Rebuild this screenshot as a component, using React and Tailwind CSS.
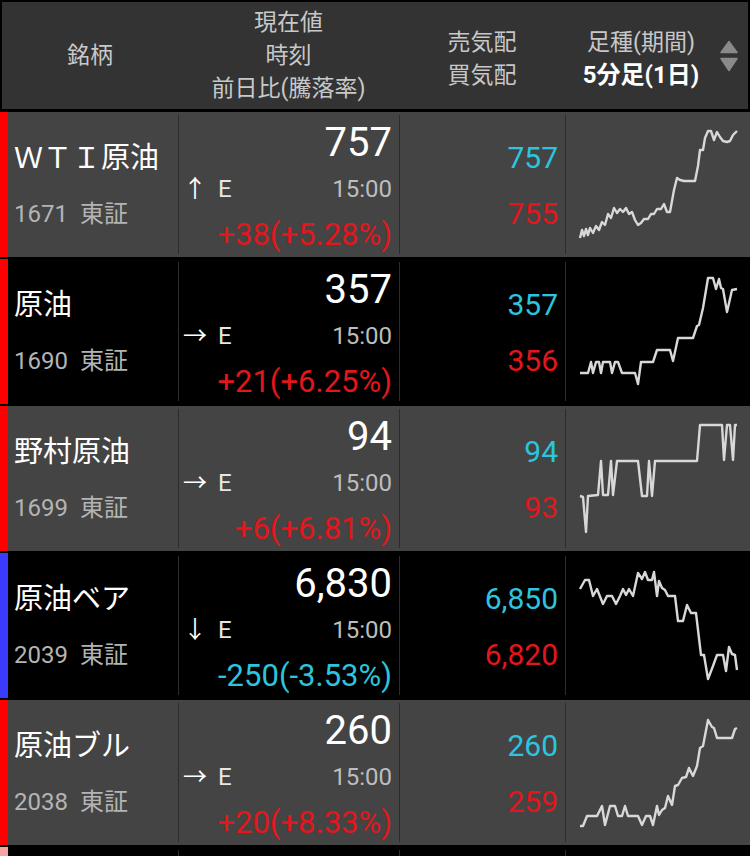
import React from 'react';

const FONT = { fontFamily: 'Roboto, "Noto Sans CJK JP", sans-serif' };

const ROWS = [
  {
    name: 'ＷＴＩ原油', code: '1671', bar: 'bg-[#ff0000]', bg: 'bg-[#444444]',
    price: '757', arrow: '↑', change: '+38(+5.28%)', down: false, ask: '757', bid: '755',
    points: '14,126 16,118 18,124 20,117 22,123 24,116 27,121 30,114 33,118 36,110 39,113 42,102 45,106 48,96 51,101 54,97 57,100 60,96 63,102 66,100 69,108 72,113 75,111 78,107 82,107 85,102 88,102 91,97 95,97 98,92 101,100 104,100 108,78 111,66 114,68 118,69 124,69 129,69 132,54 134,38 137,38 139,26 142,19 145,19 148,28 151,20 154,25 157,29 161,30 164,29 167,23 171,19',
  },
  {
    name: '原油', code: '1690', bar: 'bg-[#ff0000]', bg: 'bg-black',
    price: '357', arrow: '→', change: '+21(+6.25%)', down: false, ask: '357', bid: '356',
    points: '14,114 22,114 25,103 27,114 30,103 33,103 35,114 37,103 44,103 46,114 49,103 52,103 56,114 69,114 72,125 75,103 87,103 91,91 104,91 107,102 112,79 127,79 131,67 133,66 137,49 142,19 147,19 150,30 153,20 155,29 157,30 161,53 166,31 171,30',
  },
  {
    name: '野村原油', code: '1699', bar: 'bg-[#ff0000]', bg: 'bg-[#444444]',
    price: '94', arrow: '→', change: '+6(+6.81%)', down: false, ask: '94', bid: '93',
    points: '14,90 17,91 20,126 22,90 32,89 35,55 37,89 42,89 45,55 47,89 51,55 72,55 76,90 81,90 83,55 86,90 89,55 131,55 134,19 156,19 158,54 161,19 164,19 167,54 169,19 171,19',
  },
  {
    name: '原油ベア', code: '2039', bar: 'bg-[#3b3bff]', bg: 'bg-black',
    price: '6,830', arrow: '↓', change: '-250(-3.53%)', down: true, ask: '6,850', bid: '6,820',
    points: '14,36 19,27 23,27 27,43 31,36 37,51 41,43 46,43 50,51 54,43 57,36 60,42 63,36 67,43 72,20 76,26 79,19 82,27 86,27 88,19 91,43 93,28 96,35 99,37 102,43 109,43 112,68 117,68 121,52 125,60 130,60 135,102 138,102 142,126 147,113 151,102 157,102 160,118 163,94 166,101 169,102 171,117',
  },
  {
    name: '原油ブル', code: '2038', bar: 'bg-[#ff0000]', bg: 'bg-[#444444]',
    price: '260', arrow: '→', change: '+20(+8.33%)', down: false, ask: '260', bid: '259',
    points: '14,126 17,126 21,116 31,116 36,106 39,125 44,106 49,106 52,116 56,116 59,106 62,116 72,116 76,125 80,116 84,116 87,125 91,106 93,115 96,110 99,108 102,96 106,105 109,86 112,85 116,78 120,77 123,68 127,76 131,66 134,48 137,46 142,20 146,27 148,28 151,38 166,38 169,29 171,28',
  },
];

const Sep = () => <div className="w-px my-[3px] bg-[#2c2c2c]" />;

const Row = ({ r }) => (
  <div className={`flex h-[145px] ${r.bg}`}>
    <div className={`w-[8px] ${r.bar}`} />
    <div className="w-[170px] pt-[18px] pl-[6px]">
      <div className="text-[29px] leading-[56px] text-white whitespace-nowrap">{r.name}</div>
      <div className="text-[24px] leading-[56px] text-[#b4b4b4]">
        {r.code}<span className="ml-[12px]">東証</span>
      </div>
    </div>
    <Sep />
    <div className="w-[220px] pt-[8px] pr-[7px] pl-[4px]">
      <div className="text-[40px] leading-[46px] text-white text-right">{r.price}</div>
      <div className="flex items-center text-[24px] leading-[46px]">
        <span className="w-[22px] text-center text-white">{r.arrow}</span>
        <span className="ml-[13px] text-[#e6e6e6]">E</span>
        <span className="ml-auto text-[#bdbdbd]">15:00</span>
      </div>
      <div className={`text-[31px] leading-[46px] text-right whitespace-nowrap ${r.down ? 'text-[#2cc4de]' : 'text-[#e3161b]'}`}>
        {r.change}
      </div>
    </div>
    <Sep />
    <div className="w-[165px] pt-[18px] pr-[7px] text-right text-[30px] leading-[56px]">
      <div className="text-[#2cc4de]">{r.ask}</div>
      <div className="text-[#e3161b]">{r.bid}</div>
    </div>
    <Sep />
    <div className="flex-1">
      <svg width="184" height="145" viewBox="0 0 184 145">
        <polyline points={r.points} fill="none" stroke="#d8d8d8" strokeWidth="2.4" strokeLinejoin="round" />
      </svg>
    </div>
  </div>
);

export default function App() {
  return (
    <div className="w-[750px] h-[856px] bg-black overflow-hidden" style={FONT}>
      {/* header */}
      <div className="mx-[2px] mt-[2px] h-[107px] bg-[#333333] flex text-[23px] leading-[33px] text-[#c8c8c8]">
        <div className="w-[176px] flex items-center justify-center">銘柄</div>
        <div className="w-[221px] flex flex-col items-center justify-center">
          <div>現在値</div>
          <div>時刻</div>
          <div>前日比(騰落率)</div>
        </div>
        <div className="w-[166px] flex flex-col items-center justify-center pt-[6px]">
          <div>売気配</div>
          <div>買気配</div>
        </div>
        <div className="w-[152px] flex flex-col items-center justify-center pt-[6px]">
          <div>足種(期間)</div>
          <div className="font-bold text-white text-[24px]">5分足(1日)</div>
        </div>
        <div className="flex-1 flex items-center pl-[3px]">
          <svg width="18" height="32" viewBox="0 0 18 32">
            <path d="M9 1.5 L17 12.5 L1 12.5 Z" fill="#8a8a8a" stroke="#8a8a8a" strokeWidth="1.5" strokeLinejoin="round" />
            <path d="M1 18.5 L17 18.5 L9 30.5 Z" fill="#8a8a8a" stroke="#8a8a8a" strokeWidth="1.5" strokeLinejoin="round" />
          </svg>
        </div>
      </div>

      <div className="mt-[3px] flex flex-col gap-[2px]">
        {ROWS.map((r, i) => (
          <Row key={i} r={r} />
        ))}
        <div className="flex h-[145px] bg-black">
          <div className="w-[8px] bg-[#f7a3a3]" />
          <div className="w-[170px]" />
          <Sep />
          <div className="w-[220px]" />
          <Sep />
          <div className="w-[165px]" />
          <Sep />
        </div>
      </div>
    </div>
  );
}
